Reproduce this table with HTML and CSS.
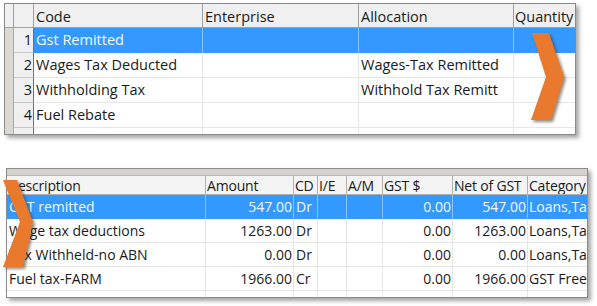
FILE: index.html
```html
<!DOCTYPE html>
<html>
<head>
<meta charset="utf-8">
<link rel="stylesheet" href="styles.css">
</head>
<body>
<div class="panel top">
  <div class="grid gtop">
    <div class="c strip hd"></div><div class="c rn hd"></div><div class="c hd">Code</div><div class="c hd">Enterprise</div><div class="c hd">Allocation</div><div class="c hd last">Quantity</div>

    <div class="c strip"></div><div class="c rn">1</div><div class="c sel">Gst Remitted</div><div class="c sel"></div><div class="c sel"></div><div class="c sel last"></div>

    <div class="c strip"></div><div class="c rn">2</div><div class="c">Wages Tax Deducted</div><div class="c"></div><div class="c">Wages-Tax Remitted</div><div class="c last"></div>

    <div class="c strip"></div><div class="c rn">3</div><div class="c">Withholding Tax</div><div class="c"></div><div class="c">Withhold Tax Remitt</div><div class="c last"></div>

    <div class="c strip"></div><div class="c rn">4</div><div class="c">Fuel Rebate</div><div class="c"></div><div class="c"></div><div class="c last"></div>

    <div class="c strip part"></div><div class="c rn part"></div><div class="c part"></div><div class="c part"></div><div class="c part"></div><div class="c part last"></div>
  </div>
  <svg class="arrow a1" width="40" height="92" viewBox="0 0 40 92"><path d="M1 1 L18 1 L33 45 L20 88 L0 88 L15 45 Z" fill="#e8792d"/></svg>
</div>

<div class="panel bottom">
  <div class="band"></div>
  <div class="grid gbot">
    <div class="c hd2">Description</div><div class="c hd2">Amount</div><div class="c hd2">CD</div><div class="c hd2">I/E</div><div class="c hd2">A/M</div><div class="c hd2">GST $</div><div class="c hd2">Net of GST</div><div class="c hd2 last">Category</div>

    <div class="c sel">GST remitted</div><div class="c sel r">547.00</div><div class="c sel">Dr</div><div class="c sel"></div><div class="c sel"></div><div class="c sel r">0.00</div><div class="c sel r">547.00</div><div class="c sel last">Loans,Tax</div>

    <div class="c">Wage tax deductions</div><div class="c r">1263.00</div><div class="c">Dr</div><div class="c"></div><div class="c"></div><div class="c r">0.00</div><div class="c r">1263.00</div><div class="c last">Loans,Tax</div>

    <div class="c">Tax Withheld-no ABN</div><div class="c r">0.00</div><div class="c">Dr</div><div class="c"></div><div class="c"></div><div class="c r">0.00</div><div class="c r">0.00</div><div class="c last">Loans,Tax</div>

    <div class="c">Fuel tax-FARM</div><div class="c r">1966.00</div><div class="c">Cr</div><div class="c"></div><div class="c"></div><div class="c r">0.00</div><div class="c r">1966.00</div><div class="c last">GST Free</div>

    <div class="c part"></div><div class="c part"></div><div class="c part"></div><div class="c part"></div><div class="c part"></div><div class="c part"></div><div class="c part"></div><div class="c part last"></div>
  </div>
  <svg class="arrow a2" width="36" height="92" viewBox="0 0 36 92"><path d="M0 0 L14 0 L30 42 L20 87 L0 87 L17 42 Z" fill="#e8792d"/></svg>
</div>
</body>
</html>
```
FILE: styles.css
```css
html, body {
  margin: 0;
  padding: 0;
  background: #ffffff;
}
body {
  width: 597px;
  height: 306px;
  overflow: hidden;
  font-family: "Open Sans", "Noto Sans", sans-serif;
  font-size: 14.5px;
  color: #1a1a1a;
}
.panel {
  position: relative;
  border: 1px solid #8a8a8a;
  background: #ffffff;
  box-shadow: 3px 3px 4px rgba(0, 0, 0, 0.35);
  overflow: visible;
}
.top {
  margin: 3px 0 0 4px;
  width: 570px;
  height: 130px;
}
.bottom {
  margin: 33px 0 0 6px;
  width: 580px;
  height: 128px;
  font-size: 14px;
}
.grid {
  display: grid;
  overflow: hidden;
}
.gtop {
  grid-template-columns: 9px 20px 169px 156px 155px 61px;
  grid-template-rows: 24px 25px 25px 25px 25px 6px;
  height: 130px;
}
.gbot {
  grid-template-columns: 199px 88px 24px 29px 36px 70px 75px 59px;
  grid-template-rows: 19px 24px 24px 24px 24px 6px;
  height: 121px;
}
.band {
  height: 6px;
  background: #d6d3ce;
  border-bottom: 1px solid #b8b8b8;
}
.c {
  box-sizing: border-box;
  border-right: 1px solid #e6e6e6;
  border-bottom: 1px solid #e6e6e6;
  padding: 0 1px 0 2px;
  white-space: nowrap;
  overflow: hidden;
  display: flex;
  align-items: center;
  line-height: 1;
}
.c.last {
  border-right: none;
  padding-left: 1px;
}
.r {
  justify-content: flex-end;
}
.strip {
  background: #dcd9d4;
  border-right: 1px solid #a8a8a8;
  border-bottom: none;
}
.rn {
  background: #f0f0f0;
  border-right: 1px solid #6e6e6e;
  border-bottom: 1px solid #c8c8c8;
  justify-content: flex-end;
  padding-right: 1px;
}
.hd {
  background: #f0f0f0;
  border-right: 1px solid #a0a0a0;
  border-bottom: 1px solid #a0a0a0;
  padding-top: 3px;
}
.hd2 {
  background: #f4f4f4;
  border-right: 1px solid #b0b0b0;
  border-bottom: 1px solid #b0b0b0;
  padding-top: 2px;
  padding-left: 1px;
  letter-spacing: -0.2px;
}
.sel {
  background: #3399ff;
  color: #f4f8ff;
  border-right-color: #8cc4ff;
  border-bottom-color: #3399ff;
}
.part {
  border-bottom: none;
}
.arrow {
  position: absolute;
  filter: drop-shadow(2px 2px 1.5px rgba(60, 40, 20, 0.55));
}
.a1 {
  left: 526px;
  top: 28px;
}
.a2 {
  left: -4px;
  top: 11px;
}
```
